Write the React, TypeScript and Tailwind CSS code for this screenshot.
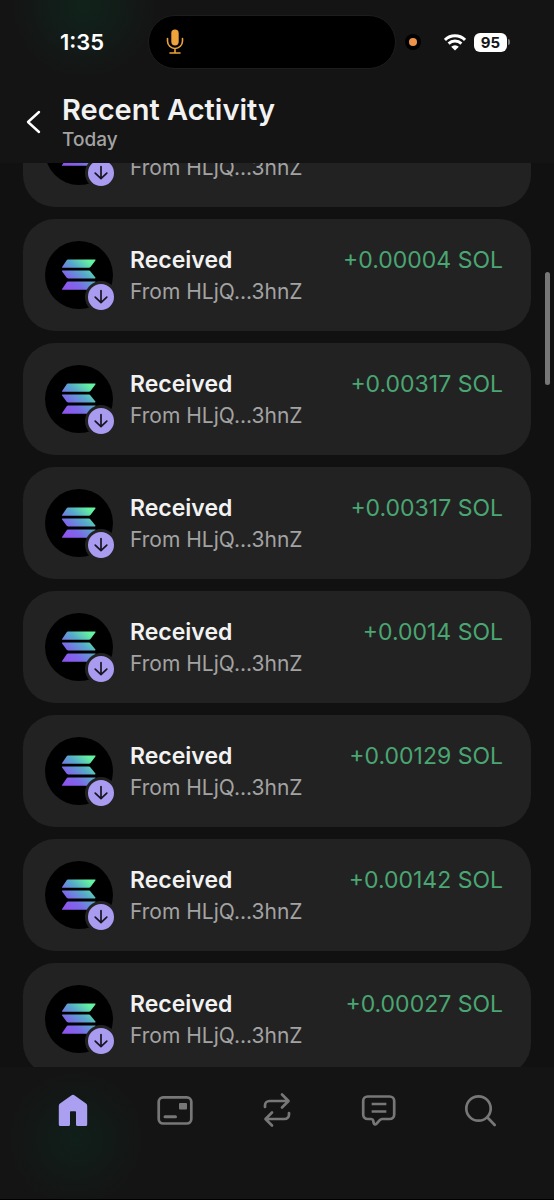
import { useLayoutEffect, useRef } from "react";

interface Transaction {
  id: number;
  title: string;
  from: string;
  amount: string;
}

const transactions: Transaction[] = [
  { id: 1, title: "Received", from: "HLjQ...3hnZ", amount: "+0.00004 SOL" },
  { id: 2, title: "Received", from: "HLjQ...3hnZ", amount: "+0.00004 SOL" },
  { id: 3, title: "Received", from: "HLjQ...3hnZ", amount: "+0.00317 SOL" },
  { id: 4, title: "Received", from: "HLjQ...3hnZ", amount: "+0.00317 SOL" },
  { id: 5, title: "Received", from: "HLjQ...3hnZ", amount: "+0.0014 SOL" },
  { id: 6, title: "Received", from: "HLjQ...3hnZ", amount: "+0.00129 SOL" },
  { id: 7, title: "Received", from: "HLjQ...3hnZ", amount: "+0.00142 SOL" },
  { id: 8, title: "Received", from: "HLjQ...3hnZ", amount: "+0.00027 SOL" },
];

const INITIAL_SCROLL = 68;

function StatusBar() {
  return (
    <div className="flex items-center pt-[15px] pr-11 pl-[60px] text-white">
      <span className="w-[88px] text-[22px] leading-7 font-semibold">1:35</span>
      {/* Dynamic island */}
      <div className="flex h-[54px] max-w-[248px] flex-1 items-center rounded-full border border-[#1d1d1d] bg-black pl-4">
        <svg width="20" height="28" viewBox="0 0 20 28" fill="none" stroke="#eea33b" strokeWidth="1.6" strokeLinecap="round">
          <rect x="6.3" y="1.500" width="7.400" height="16" rx="3.700" fill="#eea33b" stroke="none" />
          <path d="M2.500 10.500v2.500a7.500 7.500 0 0 0 15 0v-2.500M10 20.500V25M5 25h10" />
        </svg>
      </div>
      <div className="ml-[9px] flex size-4 items-center justify-center rounded-full bg-black">
        <span className="size-2 rounded-full bg-[#f0934a]" />
      </div>
      <div className="ml-auto flex items-center gap-2">
        <svg width="22" height="17" viewBox="0 0 22 17" fill="none" stroke="white" strokeWidth="2.900">
          <path d="M1 5.900a14.300 14.300 0 0 1 20 0" />
          <path d="M4.600 9.600a9.200 9.200 0 0 1 12.800 0" />
          <path d="M11 16.500 7.200 12.700a5.400 5.400 0 0 1 7.600 0Z" fill="white" stroke="none" />
        </svg>
        <div className="flex items-center gap-px">
          <span className="flex h-[19px] w-[33px] items-center justify-center rounded-md bg-white text-[15px] leading-none font-bold text-[#151515]">
            95
          </span>
          <span className="h-1.5 w-0.5 rounded-r-full bg-[#777777]" />
        </div>
      </div>
    </div>
  );
}

function SolanaLogo() {
  return (
    <svg width="36" height="32" viewBox="0 0 36 32">
      <defs>
        <linearGradient id="sol" x1="4" y1="32" x2="32" y2="0" gradientUnits="userSpaceOnUse">
          <stop offset="0" stopColor="#9350f0" />
          <stop offset="0.3" stopColor="#7d68ea" />
          <stop offset="0.6" stopColor="#56a9cb" />
          <stop offset="0.9" stopColor="#62f2a0" />
        </linearGradient>
      </defs>
      <g fill="url(#sol)">
        <path d="M7 .6h27q1 0 .4 .8L29.500 8q-.6 .8-1.600 .8H1.500q-1 0-.4-.8L5.500 1.400Q6 .6 7 .6Z" />
        <path d="M1.500 11.600h26.400q1 0 1.600 .8l4.900 6.200q.6 .8-.4 .8H7q-1 0-1.500-.8L1.100 12.400Q.5 11.600 1.500 11.600Z" />
        <path d="M7 22.600h27q1 0 .4 .8L29.500 30q-.6 .8-1.600 .8H1.500q-1 0-.4-.8L5.500 23.400Q6 22.600 7 22.600Z" />
      </g>
    </svg>
  );
}

function TransactionCard({ title, from, amount }: Transaction) {
  return (
    <li className="flex h-28 shrink-0 items-center rounded-[32px] bg-[#222222] pr-7 pl-[22px]">
      <div className="relative flex size-[68px] shrink-0 items-center justify-center rounded-full bg-black">
        <SolanaLogo />
        <span className="absolute -right-1 -bottom-1 flex size-8 items-center justify-center rounded-full border-3 border-[#222222] bg-[#a99cf0]">
          <svg width="18" height="18" viewBox="0 0 18 18" fill="none" stroke="#17151f" strokeWidth="1.700" strokeLinecap="round" strokeLinejoin="round">
            <path d="M9 2.500v12M3.200 9.200 9 14.700l5.800-5.500" />
          </svg>
        </span>
      </div>
      <div className="ml-[17px] min-w-0 flex-1 pt-0.5">
        <div className="flex justify-between gap-2 text-[23px] leading-8">
          <span className="font-semibold text-[#f2f2f2]">{title}</span>
          <span className="text-[#4aa672]">{amount}</span>
        </div>
        <p className="text-[21px] leading-8 text-[#a3a3a3]">From {from}</p>
      </div>
    </li>
  );
}

function BottomNav() {
  return (
    <nav className="grid h-[133px] shrink-0 grid-cols-5 border-b border-black bg-[#141414] bg-[radial-gradient(circle_at_76px_72px,#101f19,transparent_68px)] px-[22px] pt-[25px] pb-[71px] text-[#777777]">
      <button aria-label="Home" className="flex items-center justify-center text-[#ab9ff2]">
        <svg width="32" height="36" viewBox="0 0 32 36" fill="currentColor">
          <path d="M14.300 3.400a2.800 2.800 0 0 1 3.400 0L29 11.600a3 3 0 0 1 1.200 2.400V32.500a1.500 1.500 0 0 1-1.500 1.500h-8.200a1.500 1.500 0 0 1-1.500-1.500V20a.8 .8 0 0 0-.8-.8h-4.400a.8 .8 0 0 0-.8 .8v12.500a1.500 1.500 0 0 1-1.500 1.500H3.300a1.500 1.500 0 0 1-1.500-1.500V14A3 3 0 0 1 3 11.600Z" />
        </svg>
      </button>
      <button aria-label="Collectibles" className="flex items-center justify-center">
        <svg width="36" height="36" viewBox="0 0 36 36" fill="none" stroke="currentColor" strokeWidth="2.700">
          <rect x="1.700" y="5.300" width="32.600" height="26.200" rx="4.500" />
          <rect x="22" y="11" width="8" height="6.500" rx="1" fill="currentColor" stroke="none" />
          <path d="M8 24.700h10.500" strokeWidth="3" strokeLinecap="round" />
        </svg>
      </button>
      <button aria-label="Swap" className="flex items-center justify-center">
        <svg width="32" height="36" viewBox="0 0 32 36" fill="none" stroke="currentColor" strokeWidth="2.700" strokeLinecap="round" strokeLinejoin="round">
          <path d="M4 15v-1.500A4.500 4.500 0 0 1 8.500 9H27M21 2.500 27.500 9 21 15.500" />
          <path d="M28 21v1.500a4.500 4.500 0 0 1-4.500 4.500H5M11 20.500 4.500 27l6.500 6.500" />
        </svg>
      </button>
      <button aria-label="Messages" className="flex items-center justify-center">
        <svg width="36" height="36" viewBox="0 0 36 36" fill="none" stroke="currentColor" strokeWidth="2.700" strokeLinecap="round" strokeLinejoin="round">
          <path d="M6.700 4.500h22a4.500 4.500 0 0 1 4.500 4.500v13.500a4.500 4.500 0 0 1-4.500 4.500h-7.500q-1.500 0-2.500 1.200l-3 3.300q-2.200 2-3-.5l-.5-2.500q-.3-1.500-2-1.500H6.700a4.500 4.500 0 0 1-4.500-4.500V9a4.500 4.500 0 0 1 4.500-4.500Z" />
          <path d="M12 12h12M12 19.500h12" strokeLinecap="square" />
        </svg>
      </button>
      <button aria-label="Search" className="flex items-center justify-center">
        <svg width="34" height="36" viewBox="0 0 34 36" fill="none" stroke="currentColor" strokeWidth="2.700" strokeLinecap="round">
          <circle cx="14.500" cy="16.500" r="12.200" />
          <path d="m23.500 25.500 7.200 7.500" />
        </svg>
      </button>
    </nav>
  );
}

export default function App() {
  const listRef = useRef<HTMLElement>(null);

  useLayoutEffect(() => {
    if (listRef.current) listRef.current.scrollTop = INITIAL_SCROLL;
  }, []);

  return (
    <div className="relative flex h-screen flex-col overflow-hidden bg-[#111111] font-[Inter,sans-serif]">
      <header className="h-[163px] shrink-0 bg-[#141414] bg-[radial-gradient(circle_at_84px_6px,#10231b,transparent_72px)]">
        <StatusBar />
        <div className="mt-[23px] flex items-center pl-[26px]">
          <button aria-label="Back" className="w-9 text-white">
            <svg width="16" height="24" viewBox="0 0 16 24" fill="none" stroke="currentColor" strokeWidth="2.400" strokeLinecap="round" strokeLinejoin="round">
              <path d="M13 2 2 12l11 10" />
            </svg>
          </button>
          <div>
            <h1 className="text-[29px] leading-9 font-semibold text-[#f2f2f2]">Recent Activity</h1>
            <p className="text-[19px] leading-6 font-medium text-[#a3a3a3]">Today</p>
          </div>
        </div>
      </header>

      <main ref={listRef} className="min-h-0 flex-1 overflow-y-auto px-[23px] [scrollbar-width:none]">
        <ul className="flex flex-col gap-3">
          {transactions.map((tx) => (
            <TransactionCard key={tx.id} {...tx} />
          ))}
        </ul>
      </main>

      {/* Scroll indicator */}
      <span className="absolute top-[272px] right-1 h-[113px] w-[5px] rounded-full bg-[#777777]" />

      <BottomNav />
    </div>
  );
}
